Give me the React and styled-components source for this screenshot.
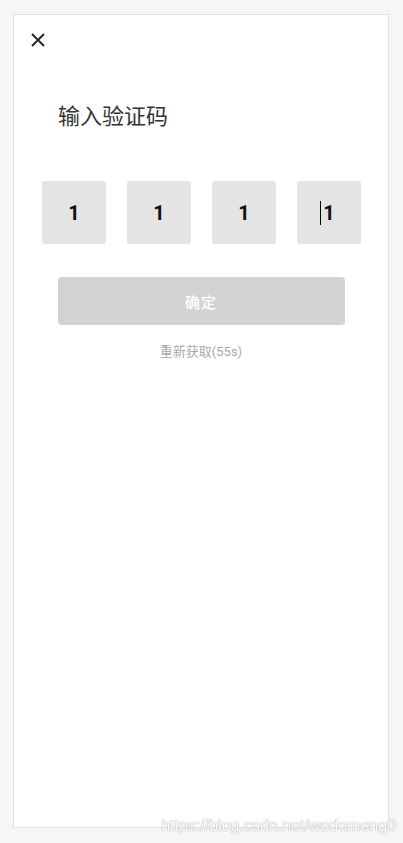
import React from "react";
import styled, { createGlobalStyle } from "styled-components";

const GlobalStyle = createGlobalStyle`
  html, body {
    margin: 0;
    padding: 0;
    background: #f6f6f6;
    font-family: Roboto, "Noto Sans CJK SC", sans-serif;
  }
`;

const Page = styled.div`
  width: 403px;
  height: 843px;
  padding: 14px 14px 15px 13px;
  box-sizing: border-box;
  position: relative;
`;

const Card = styled.div`
  height: 100%;
  background: #fff;
  border: 1px solid #e2e2e2;
  box-sizing: border-box;
  display: flex;
  flex-direction: column;
  align-items: center;
`;

const TopBar = styled.div`
  align-self: stretch;
  height: 50px;
  padding: 17px 0 0 16px;
  box-sizing: border-box;
`;

const Title = styled.h2`
  align-self: flex-start;
  margin: 33px 0 0 44px;
  font-size: 22px;
  font-weight: 400;
  color: #333;
  font-family: "Noto Sans CJK SC", sans-serif;
  line-height: 32px;
`;

const Codes = styled.div`
  display: flex;
  gap: 21px;
  margin-top: 51px;
  padding-left: 1px;
`;

const CodeBox = styled.div`
  width: 64px;
  height: 63px;
  border-radius: 3px;
  background: #e4e4e4;
  display: flex;
  align-items: center;
  justify-content: center;
  font-size: 20px;
  font-weight: 700;
  color: #111;
  position: relative;
`;

const Caret = styled.span`
  position: absolute;
  left: 23px;
  top: 20px;
  width: 1px;
  height: 24px;
  background: #000;
`;

const Confirm = styled.button`
  margin-top: 33px;
  width: 287px;
  height: 48px;
  border: none;
  border-radius: 4px;
  background: #d3d3d3;
  color: #fff;
  font-size: 15px;
  font-family: "Noto Sans CJK SC", sans-serif;
  font-weight: 500;
  letter-spacing: 1px;
  padding: 0;
`;

const Resend = styled.div`
  margin-top: 16px;
  font-size: 13px;
  color: #aaa;
  font-family: Roboto, "Noto Sans CJK SC", sans-serif;
`;

const Watermark = styled.div`
  position: absolute;
  right: 7px;
  bottom: 8px;
  font-family: "Liberation Sans", sans-serif;
  font-size: 16px;
  color: #fff;
  text-shadow: 0 0 1px #aaa, 0 0 1px #aaa;
`;

const CloseIcon = () => (
  <svg width="16" height="16" viewBox="0 0 16 16">
    <path d="M2 2 L14 14 M14 2 L2 14" stroke="#222" strokeWidth="1.8" fill="none" />
  </svg>
);

export default function App() {
  const code = ["1", "1", "1", "1"];
  return (
    <>
      <GlobalStyle />
      <Page>
        <Card>
          <TopBar>
            <CloseIcon />
          </TopBar>
          <Title>输入验证码</Title>
          <Codes>
            {code.map((c, i) => (
              <CodeBox key={i}>
                {i === code.length - 1 && <Caret />}
                {c}
              </CodeBox>
            ))}
          </Codes>
          <Confirm>确定</Confirm>
          <Resend>重新获取(55s)</Resend>
        </Card>
        <Watermark>https://blog.csdn.net/wodemeng0</Watermark>
      </Page>
    </>
  );
}
